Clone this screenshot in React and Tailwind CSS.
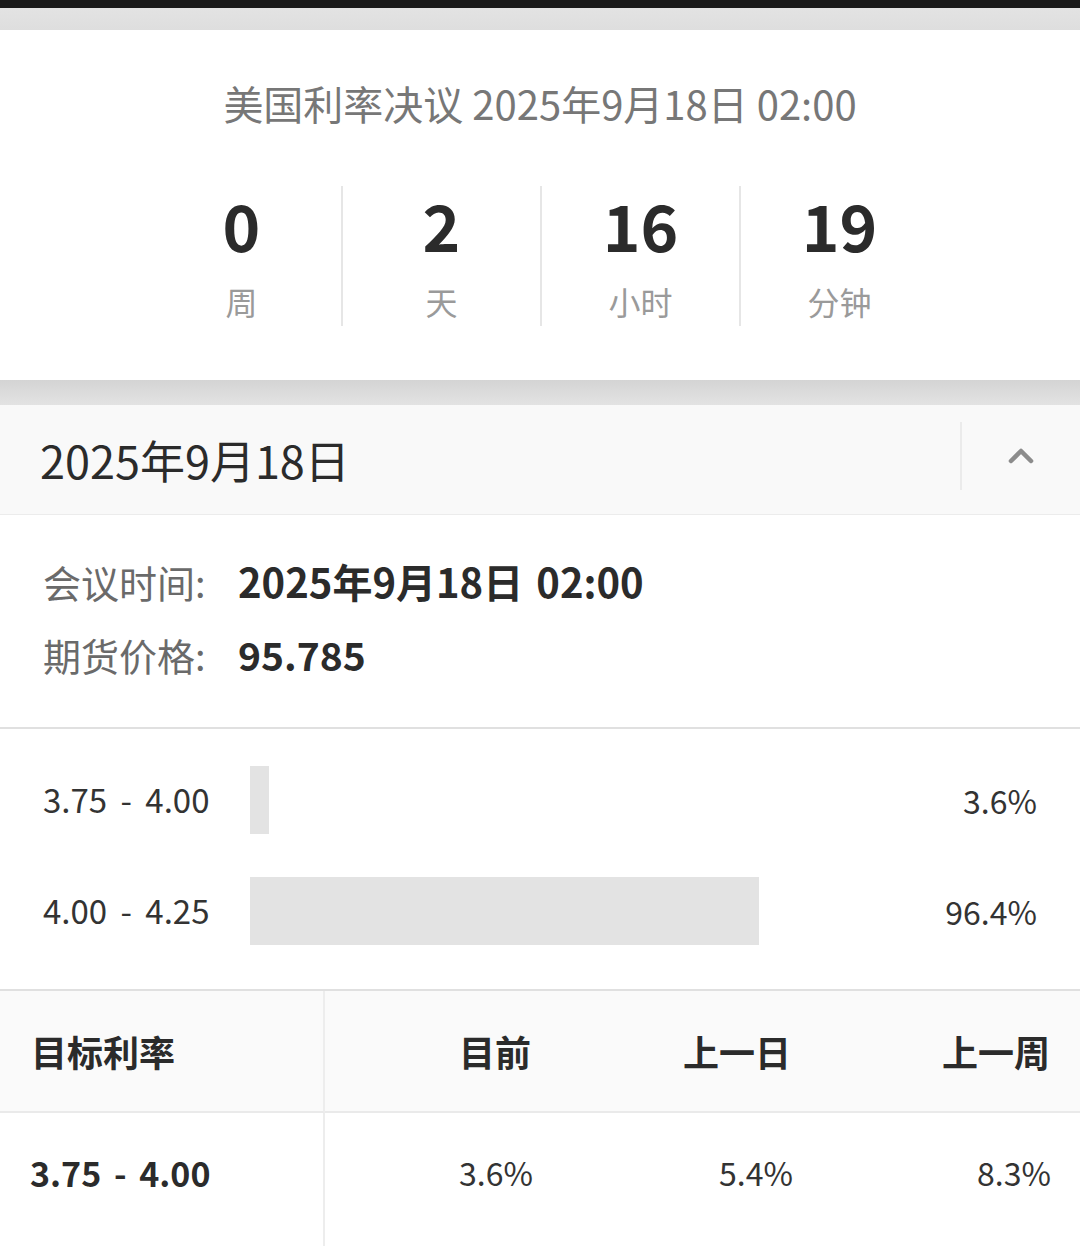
import { ChevronUp } from 'lucide-react'

const countdown = [
  { value: '0', label: '周' },
  { value: '2', label: '天' },
  { value: '16', label: '小时' },
  { value: '19', label: '分钟' },
]

const bars = [
  { range: '3.75 - 4.00', pct: 3.6 },
  { range: '4.00 - 4.25', pct: 96.4 },
]

const font = { fontFamily: '"Noto Sans CJK SC", "Noto Sans", sans-serif' }

export default function App() {
  return (
    <div className="w-[1080px] h-[1246px] overflow-hidden bg-white" style={font}>
      <div className="h-[8px] bg-[#1a1a1a]" />
      <div className="h-[22px] bg-gradient-to-b from-[#e3e3e3] to-[#dedede]" />

      {/* countdown card */}
      <div className="h-[350px] bg-white flex flex-col items-center">
        <p className="mt-[49px] text-[40px] leading-[48px] text-[#777]">美国利率决议 2025年9月18日 02:00</p>
        <div className="mt-[59px] flex">
          {countdown.map((c, i) => (
            <div
              key={c.label}
              className={`w-[199px] h-[140px] flex flex-col items-center ${i > 0 ? 'border-l-2 border-[#e6e6e6]' : ''}`}
            >
              <span className="text-[64px] leading-[76px] font-bold text-[#2b2b2b]">{c.value}</span>
              <span className="mt-[19px] text-[32px] leading-[40px] text-[#9a9a9a]">{c.label}</span>
            </div>
          ))}
        </div>
      </div>

      <div className="h-[25px] bg-gradient-to-b from-[#d4d4d4] to-[#e3e3e3]" />

      {/* section header */}
      <div className="h-[110px] bg-[#f9f9f9] border-b border-[#ececec] flex items-center">
        <span className="flex-1 pl-[40px] text-[45px] leading-[52px] text-[#2b2b2b]">2025年9月18日</span>
        <div className="w-[2px] h-[68px] bg-[#ebebeb] mt-[-8px]" />
        <div className="w-[118px] flex justify-center mt-[-8px]">
          <ChevronUp size={40} strokeWidth={2.75} className="text-[#8c8c8c]" />
        </div>
      </div>

      {/* info */}
      <div className="h-[214px] pl-[43px] pt-[39px] border-b-2 border-[#e0e0e0]">
        <div className="flex items-center h-[54px]">
          <span className="w-[195px] text-[38px] text-[#6a6a6a]">会议时间:</span>
          <span className="text-[40px] font-bold text-[#2b2b2b] [word-spacing:4px]">2025年9月18日 02:00</span>
        </div>
        <div className="flex items-center h-[54px] mt-[19px]">
          <span className="w-[195px] text-[38px] text-[#6a6a6a]">期货价格:</span>
          <span className="text-[39px] font-bold text-[#2b2b2b]">95.785</span>
        </div>
      </div>

      {/* probability bars */}
      <div className="h-[262px] pt-[37px] border-b-2 border-[#e0e0e0]">
        {bars.map((b, i) => (
          <div key={b.range} className={`flex items-center h-[68px] ${i > 0 ? 'mt-[43px]' : ''}`}>
            <span className="w-[250px] pl-[43px] text-[33px] text-[#333] [word-spacing:6px]">{b.range}</span>
            <div className="w-[528px] h-[68px]">
              <div className="h-full bg-[#e3e3e3]" style={{ width: `${b.pct}%` }} />
            </div>
            <span className="flex-1 pr-[43px] text-right text-[32px] text-[#333]">{b.pct}%</span>
          </div>
        ))}
      </div>

      {/* table */}
      <div className="grid grid-cols-[325px_238px_260px_1fr]">
        <div className="h-[122px] bg-[#fafafa] border-r-2 border-[#ededed] border-b-2 border-b-[#eaeaea] flex items-center pl-[31px] text-[36px] font-bold text-[#2b2b2b]">目标利率</div>
        <div className="h-[122px] bg-[#fafafa] border-b-2 border-[#eaeaea] flex items-center justify-end pr-[32px] text-[36px] font-bold text-[#2b2b2b]">目前</div>
        <div className="h-[122px] bg-[#fafafa] border-b-2 border-[#eaeaea] flex items-center justify-end pr-[32px] text-[36px] font-bold text-[#2b2b2b]">上一日</div>
        <div className="h-[122px] bg-[#fafafa] border-b-2 border-[#eaeaea] flex items-center justify-end pr-[30px] text-[36px] font-bold text-[#2b2b2b]">上一周</div>

        <div className="h-[134px] pb-[16px] border-r-2 border-[#ededed] flex items-center pl-[30px] text-[34px] font-bold text-[#2b2b2b] [word-spacing:5px]">3.75 - 4.00</div>
        <div className="h-[134px] pb-[16px] flex items-center justify-end pr-[30px] text-[32px] text-[#333]">3.6%</div>
        <div className="h-[134px] pb-[16px] flex items-center justify-end pr-[30px] text-[32px] text-[#333]">5.4%</div>
        <div className="h-[134px] pb-[16px] flex items-center justify-end pr-[29px] text-[32px] text-[#333]">8.3%</div>
      </div>
    </div>
  )
}
